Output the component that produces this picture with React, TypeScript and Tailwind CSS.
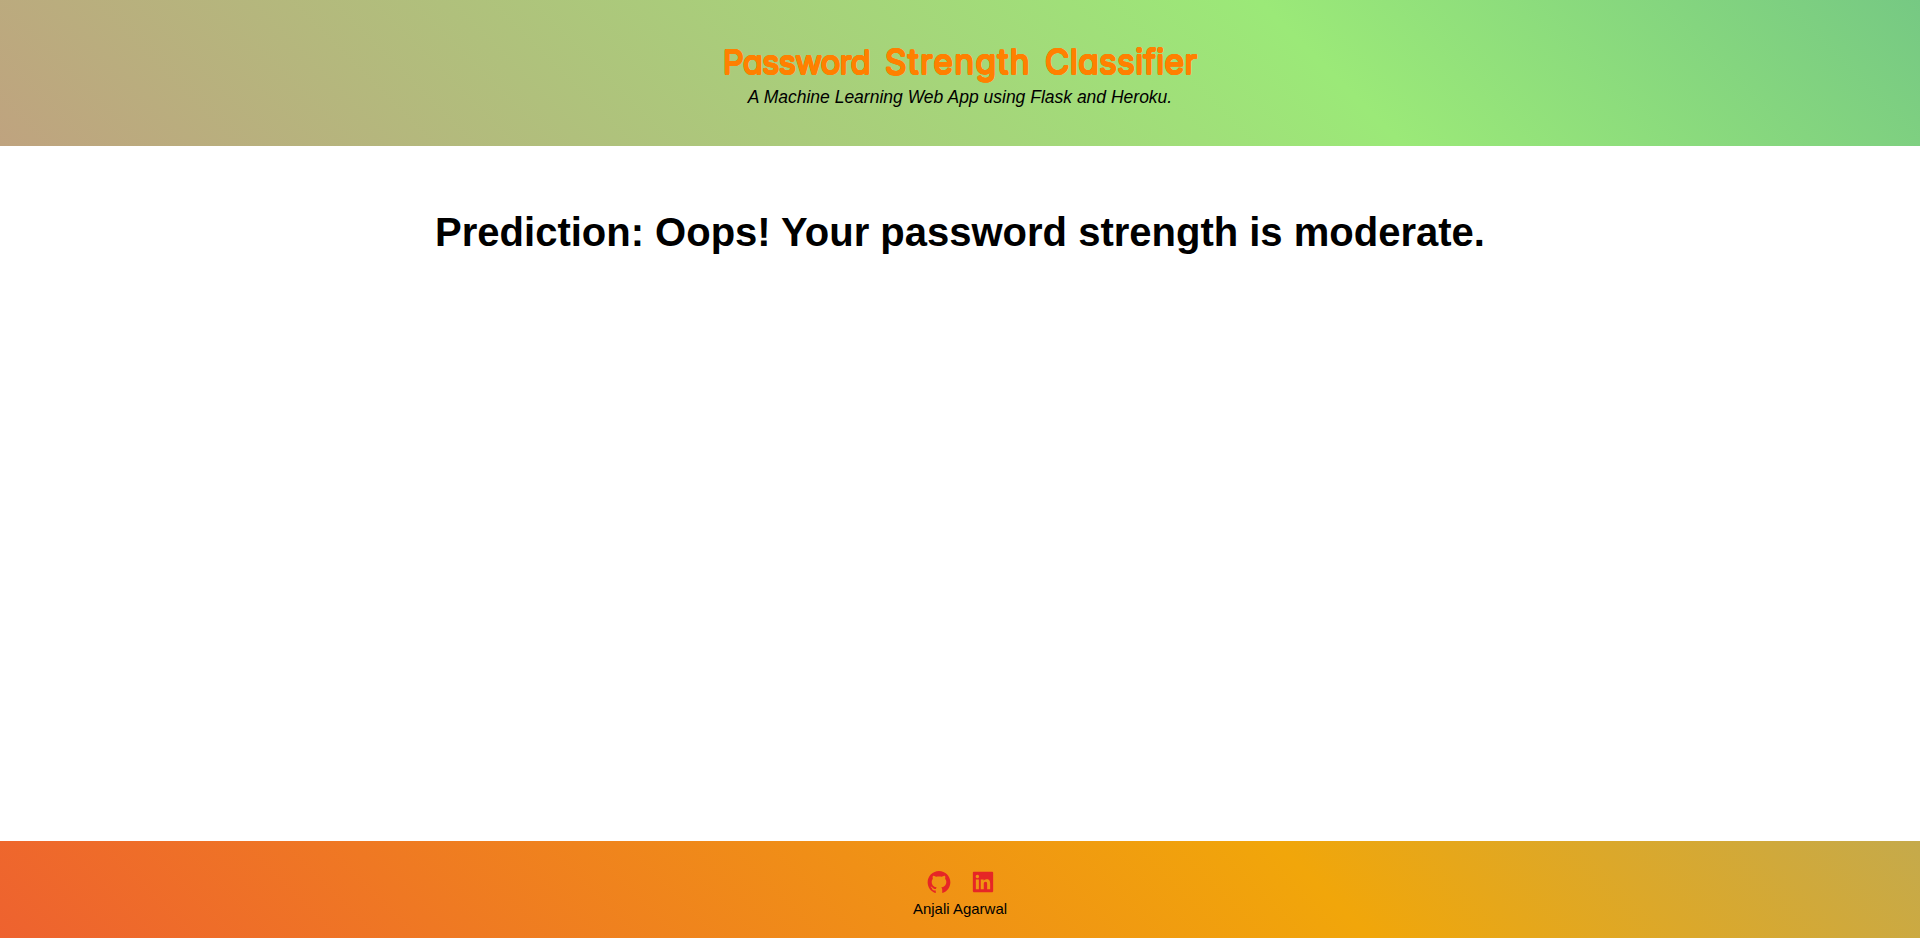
import { AiFillGithub, AiFillLinkedin } from "react-icons/ai";

export default function App() {
  return (
    <div className="flex h-screen flex-col bg-white font-['Liberation_Sans',Arial,sans-serif] text-black">
      <header className="flex h-[146px] shrink-0 flex-col items-center bg-[linear-gradient(45deg,#bfa37f_0%,#9be978_68%,#76c983_100%)] pt-[40px]">
        <h1 className="flex h-[44px] items-baseline whitespace-nowrap font-['Comic_Sans_MS',Inter,sans-serif] text-[34px] font-normal leading-[44px] text-[#ff8000] [font-feature-settings:'cv11'] [text-shadow:0.8px_0_#ff8000,-0.8px_0_#ff8000,0_0.8px_#ff8000,0_-0.8px_#ff8000,0.6px_0.6px_#ff8000,-0.6px_0.6px_#ff8000,0.6px_-0.6px_#ff8000,-0.6px_-0.6px_#ff8000]">
          <span className="mr-[15px] text-[33px] tracking-[-0.9px]">Password</span>
          <span className="mr-[14px] tracking-[1.1px]">Strength</span>
          <span className="tracking-[0.1px]">Classifier</span>
        </h1>
        <p className="text-[17.5px] italic leading-[26px]">A Machine Learning Web App using Flask and Heroku.</p>
      </header>
      <main className="flex flex-1 justify-center pt-[63px]">
        <h2 className="text-[40px] font-bold leading-[46px]">Prediction: Oops! Your password strength is moderate.</h2>
      </main>
      <footer className="flex h-[97px] shrink-0 flex-col items-center bg-[linear-gradient(45deg,#ee622f_0%,#f1a60a_68%,#c5aa4b_100%)] pt-[28px]">
        <div className="ml-px flex items-center gap-[18px] text-[#e62626]">
          <a aria-label="GitHub"><AiFillGithub size={26} /></a>
          <a aria-label="LinkedIn"><AiFillLinkedin size={26} /></a>
        </div>
        <p className="text-[15px] leading-[28px]">Anjali Agarwal</p>
      </footer>
    </div>
  );
}
